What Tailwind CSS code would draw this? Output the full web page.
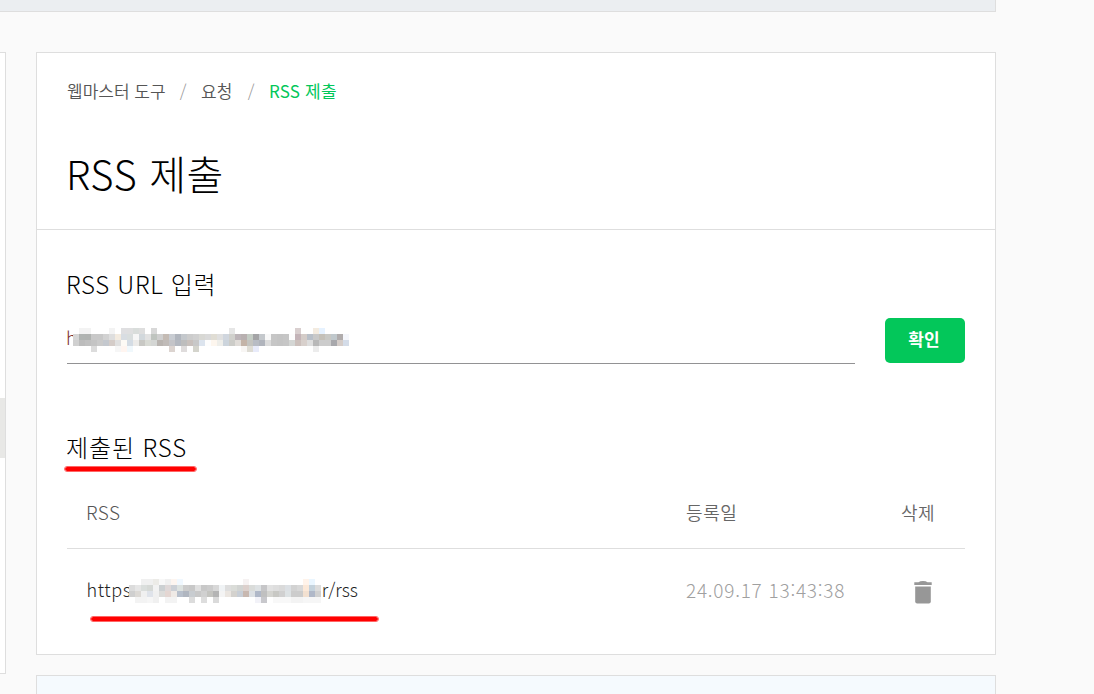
<!DOCTYPE html>
<html lang="ko">
<head>
    <meta charset="UTF-8">
    <meta name="viewport" content="width=device-width, initial-scale=1.0">
    <title>RSS 제출</title>
    <!-- Tailwind CSS CDN -->
    <script src="https://cdn.jsdelivr.net/npm/@tailwindcss/browser@4"></script>
</head>
<body class="bg-[#fafafa] w-[1094px] h-[694px] overflow-hidden font-['Noto_Sans_CJK_KR',sans-serif] font-light text-[#1e1e23]">
    <!-- Top banner -->
    <div class="w-[996px] h-3 bg-[#ebeef1] border-r border-b border-[#dedede]"></div>

    <div class="flex items-start mt-10 gap-[30px]">
        <!-- Side menu edge -->
        <aside class="w-1.5 h-[622px] shrink-0 bg-white border-y border-r border-[#dedede] pt-[345px]">
            <div class="h-[60px] bg-[#e8e8e6]"></div>
        </aside>

        <div class="w-[960px] shrink-0">
            <main class="h-[603px] bg-white border border-[#dedede]">
                <!-- Title -->
                <header class="h-[177px] px-[30px] pt-[26px] border-b border-[#dedede]">
                    <nav class="flex items-center h-6 text-[17px] font-[350] text-[#555] whitespace-nowrap">
                        <span id="crumb-home" class="w-[98px]">웹마스터 도구</span>
                        <span class="w-9 text-center font-light text-[#999]">/</span>
                        <span class="w-8">요청</span>
                        <span class="w-9 text-center font-light text-[#999]">/</span>
                        <span class="tracking-[0.2px] font-normal text-[#03c75a]">RSS 제출</span>
                    </nav>
                    <h1 class="mt-[40px] -indent-px text-[40px] leading-[60px] tracking-[0.6px] text-black">RSS 제출</h1>
                </header>

                <!-- URL form -->
                <section class="px-[30px] pt-[36px]">
                    <h2 class="-indent-px text-[24px] leading-9 tracking-[0.7px] text-black">RSS URL 입력</h2>
                    <div class="flex mt-[16px] gap-[30px]">
                        <div class="relative w-[788px] h-[46px] border-b border-[#929294] text-[18px] leading-[39px]">
                            <span class="block -indent-px text-[#7a2b2b]">h</span>
                            <svg id="mask-input" class="absolute left-1.5 top-[10px]" width="276" height="24" shape-rendering="crispEdges"></svg>
                        </div>
                        <button class="w-20 h-[45px] rounded-[5px] bg-[#03c75a] text-white text-[17px] leading-[41px] font-bold pb-1 pr-0.5">확인</button>
                    </div>
                </section>

                <!-- Submitted list -->
                <section class="px-[30px] pt-[65px]">
                    <h2 class="relative -indent-px text-[24px] leading-9 tracking-[0.9px] text-black">
                        제출된 RSS
                        <span class="absolute left-[-3px] top-[37px] w-[133px] h-[6px] rounded-full border border-[#ff6666] bg-[#ff0000] bg-clip-padding"></span>
                    </h2>
                    <div class="flex items-center h-[70px] mt-[14px] pl-[19px] pb-0.5 border-b border-[#dedede] text-[18px] text-[#666]">
                        <span class="w-[600px] text-[19px] tracking-[0.5px] text-[#555]">RSS</span>
                        <span class="w-[215px] font-[350] tracking-[0.6px]">등록일</span>
                        <span class="font-[350] tracking-[0.4px]">삭제</span>
                    </div>
                    <div class="relative flex items-center h-[84px] pl-5 text-[18px]">
                        <div class="relative flex w-[599px] mb-[3px] text-[#222]">
                            <span id="url-start" class="w-[227px] -indent-[0.5px] tracking-[0.6px]">https</span>
                            <span id="url-end" class="w-11 text-right whitespace-nowrap">r/rss</span>
                            <svg id="mask-row" class="absolute left-[42px] top-[3px]" width="196" height="24" shape-rendering="crispEdges"></svg>
                        </div>
                        <span id="date" class="w-[228px] mb-[2px] text-[19px] text-[#a0a0a0] tracking-[0.75px]">24.09.17 13:43:38</span>
                        <svg class="w-[18px] h-[23px] mt-0.5" viewBox="0 0 18 23" fill="#979797">
                            <path d="M0.3 1.3H4.5Q6 0 9 0Q12 0 13.5 1.3H17.7V4H0.3Z"/>
                            <path d="M1.2 5.5H16.8V20.5Q16.8 22.5 14.8 22.5H3.2Q1.2 22.5 1.2 20.5Z"/>
                        </svg>
                        <span class="absolute left-[23px] top-[67px] w-[289px] h-[6px] rounded-full border border-[#ff6666] bg-[#ff0000] bg-clip-padding"></span>
                    </div>
                </section>
            </main>

            <!-- Next panel -->
            <div class="mt-5 h-10 bg-[#f5fafe] border border-[#dedede]"></div>
        </div>
    </div>

    <script>
        // Mosaic rows: [first column, colour, colour, ...] runs per row, 6px cells
        const inputMask = [
            [[1, 'f3f3f3', 'f3f3f3'], [6, 'f3f3f3'], [8, 'dfdfe1', 'dfdfe0', 'd9dddb', 'dedede'], [13, 'd8d8d8'], [26, 'e6e6e6'], [37, 'd9cfcf'], [40, 'f3ebe0', 'e6f2ff']],
            [[0, 'd6d6d6', 'b0b4b2', 'b0b3b1', 'c8c8c8', 'c8c8c8', 'd2d2d2', 'dedede', 'f3ebe0', 'd8dde2', 'd9dede', 'f6f6f6', 'd2d8dc', 'e2e2e2', 'bfc4bf', 'cfcfcf', 'c4bbb4', 'c8ccd2', 'b1b6be', 'c4c8cc', 'cccccc', 'd0d0d0', 'd8d8d4', 'dadada', 'e0ddd4', 'e0e0e0', 'd0d6de', 'd0d0cc', 'bcb4b8', 'b8b0b0', 'c4ccc4', 'a4a4a6', 'c4c8cc', 'f8f8f8', 'c6c6c6', 'c4c4c4', 'c6c6c6', 'fdfdfd', 'c4b4b8', 'd4ccc8', 'b8bfc8', 'c8c8c8', 'c4c0b8', 'c8c8c4', 'c0c8cc', 'b0acac', 'f4f6fb']],
            [[0, 'd0d0d0', 'bcbcbc', 'c0c0c0', 'c4c4c4', 'cacaca', 'c4c8ce', 'd4ccc8', 'e0e0e0', 'fdfaf5', 'd4dce4', 'ecebe9', 'c8c8c4', 'd8dad4', 'd4d6d4', 'b9b4b0', 'c0bbb8', 'c4c4c8', 'b4b8c0', 'bdbdbd', 'c8c0bc', 'c8c8c8', 'dce4ee', 'fdfdfd', 'fdf6ee', 'eeeeea', 'ccd4dc', 'ccccc8', 'e0dcd8', 'c4b4a8', 'c4c4c0', 'b8bcc4', 'b0b4bc', 'dcdcdc', 'c6c6c6', 'c4c4c4', 'c6c6c6', 'd4d6d4', 'ccc0bc', 'd8d0cc', 'dedede', 'b8b8b8', 'cccccc', 'cccccc', 'a8a8ac', 'd4ccc8', 'd4dce8']],
            [[3, 'dcdcdc'], [7, 'f6f6f6', 'fff5f0', 'f0f8fc'], [16, 'dcd4d0'], [18, 'dfdcdc'], [20, 'd4d4cc'], [28, 'f8f6f4', 'dedcd4', 'e8ebfa'], [40, 'ececec']]
        ];
        const rowMask = [
            [[2, 'f0f0f0', 'f0f0f0', 'ecebe7', 'f8f8f8', 'f0f0f0', 'fdf5f0', 'f0f8ff'], [19, 'f6f2f2'], [29, 'fff3ea', 'eaf6ff']],
            [[0, 'dcdcdc', 'e6e6e6', 'dadedc', 'd6d9d6', 'f2f2f2', 'ccd0d2', 'dfd8d8', 'ccd0d6', 'dde2e0', 'cccccc', 'c8c8c8', 'e0e0e0', 'c8c8c8', 'cccccc', 'd8d8d8', 'f0f3f5', 'dedede', 'dadcd8', 'd2d4d2', 'dcd0cc', 'dadcda', 'dee2e4', 'c6c6c8', 'e2e2e2', 'dedede', 'dadada', 'dce0e4', 'd2d2d2', 'd8d8d8', 'fbe8d8', 'c4d2dc', 'dcdcdc']],
            [[0, 'cfcfcf', 'dcd9d5', 'f0f0f0', 'dfe3ea', 'f0f0f0', 'dcdcda', 'e4d6d2', 'efeae6', 'b8c0cc', 'b0b6c0', 'c8ccd0', 'c8c8c8', 'd0d0d0', 'c4c4c0', 'b4b4b4', 'f4f4f4', 'ebe6e1', 'd4d2ce', 'c8ced6', 'c8b8b0', 'dce0e4', 'b0b8c8', 'c0c0c0', 'd4d4d0', 'c8c8c4', 'd0d0d0', 'dde2e4', 'cccccc', 'cccccc', 'f2e0d0', 'b0b8c8', 'd0d0d0']],
            [[1, 'f3f3f3', 'f3f3f3', 'f6f6f6', 'f0f0f0'], [6, 'f3f3f3', 'f3f3f3'], [10, 'dcdcdc'], [12, 'dddddd'], [14, 'dadada'], [21, 'f2f2f8', 'c8c8cc'], [24, 'f8f8f8', 'f8f8f8', 'f8f8f8', 'f3f3f3', 'f3f3f3', 'f6f6f6', 'f6f6f6', 'f6f6f6']]
        ];

        function drawMask(id, rows, columns) {
            // White base hides the text below the empty cells
            let cells = `<rect y="0" width="${columns * 6}" height="24" fill="#fff"/>`;
            rows.forEach((runs, y) => {
                runs.forEach(([start, ...colors]) => {
                    colors.forEach((color, i) => {
                        cells += `<rect x="${(start + i) * 6}" y="${y * 6}" width="6" height="6" fill="#${color}"/>`;
                    });
                });
            });
            document.getElementById(id).innerHTML = cells;
        }

        drawMask('mask-input', inputMask, 46);
        drawMask('mask-row', rowMask, 32);
    </script>
</body>
</html>
